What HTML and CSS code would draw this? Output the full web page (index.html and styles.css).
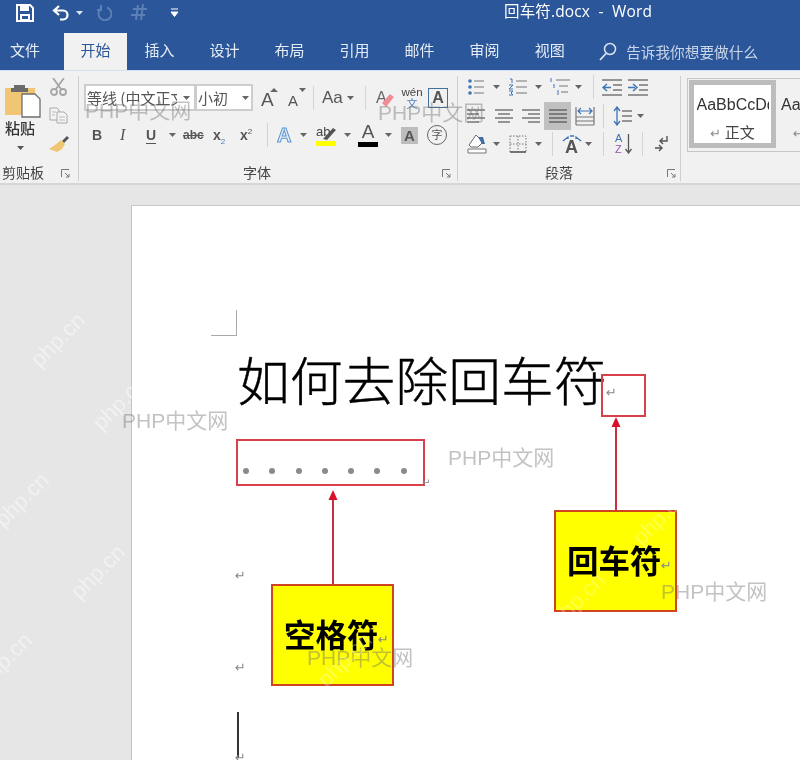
FILE: index.html
```html
<!DOCTYPE html>
<html lang="zh-CN">
<head>
<meta charset="utf-8">
<title>回车符.docx - Word</title>
<link rel="stylesheet" href="styles.css">
</head>
<body>
<div class="app">
  <header class="titlebar">
    <svg class="ml16" width="18" height="18" viewBox="0 0 18 18"><path d="M1 1h13l3 3v13H1z" fill="none" stroke="#fff" stroke-width="2"/><rect x="4" y="2" width="9" height="5" fill="#fff"/><rect x="4" y="10" width="10" height="7" fill="#fff"/><rect x="6" y="12" width="6" height="3" fill="#2b579a"/></svg>
    <svg class="ml18" width="18" height="17" viewBox="0 0 18 17"><path d="M7 2L2 6.500 7 11M2 6.500h9c6 0 6 9 0 9H8" fill="none" stroke="#fff" stroke-width="2.200"/></svg>
    <svg class="ml6" width="7" height="4" viewBox="0 0 7 4"><path d="M0 0h7L3.500 4z" fill="#dbe5f1"/></svg>
    <svg class="ml13" width="16" height="17" viewBox="0 0 16 17"><path d="M5 1v5h-4M5 4.500A6.500 6.500 0 1 0 11 3.500" fill="none" stroke="#5d7fb5" stroke-width="2"/></svg>
    <svg class="ml18" width="18" height="17" viewBox="0 0 18 17"><path d="M6 16L8 1M11 16L13 0M1 11h14M3 5h14" fill="none" stroke="#5d7fb5" stroke-width="2"/></svg>
    <svg class="ml22" width="9" height="9" viewBox="0 0 9 9"><path d="M1 1h7M1 4h7L4.500 8.500 1 4z" fill="#fff" stroke="#fff"/></svg>
    <div class="doc-title">回车符.docx&nbsp; -&nbsp; Word</div>
  </header>

  <nav class="tabs">
    <span class="tab tab-file">文件</span>
    <span class="tab tab-active">开始</span>
    <span class="tab">插入</span>
    <span class="tab">设计</span>
    <span class="tab">布局</span>
    <span class="tab">引用</span>
    <span class="tab">邮件</span>
    <span class="tab">审阅</span>
    <span class="tab">视图</span>
    <svg class="ml17" width="18" height="19" viewBox="0 0 18 19"><circle cx="11" cy="7" r="5.500" fill="none" stroke="#dbe5f1" stroke-width="1.500"/><path d="M7 11.500L1 18" stroke="#dbe5f1" stroke-width="1.800"/></svg>
    <span class="tell">告诉我你想要做什么</span>
  </nav>

  <section class="ribbon">
    <div class="group g-clip">
      <div class="clip-body">
        <div class="paste">
          <svg width="37" height="34" viewBox="0 0 37 34"><rect x="1" y="4" width="30" height="27" fill="#f0c674"/><path d="M10 4V1h11v3h3v4H7V4z" fill="#6b6b6b"/><path d="M18 10h13l5 5v18H18z" fill="#fff" stroke="#6e6e6e" stroke-width="1.300"/></svg>
          <span class="paste-label">粘贴</span>
          <svg class="paste-caret" width="7" height="4" viewBox="0 0 7 4"><path d="M0 0h7L3.500 4z" fill="#555"/></svg>
        </div>
        <div class="tools">
          <svg width="19" height="18" viewBox="0 0 19 18"><path d="M4 0l8 11M15 0L7 11" stroke="#a5a5a5" stroke-width="1.800" fill="none"/><circle cx="5" cy="14" r="3" fill="none" stroke="#a5a5a5" stroke-width="1.800"/><circle cx="14" cy="14" r="3" fill="none" stroke="#a5a5a5" stroke-width="1.800"/></svg>
          <svg width="19" height="17" viewBox="0 0 19 17"><path d="M1 1h7l2 2v10H1z" fill="#f4f4f4" stroke="#a8a8a8"/><path d="M8 5h7l3 3v8H8z" fill="#f4f4f4" stroke="#a8a8a8"/><path d="M10 10h6M10 13h6M3 5h4M3 8h3" stroke="#bbb"/></svg>
          <svg width="20" height="17" viewBox="0 0 20 17"><path d="M13 6l5-5 2 2-5 5z" fill="#555"/><path d="M12 5l4 4-3 5-5 3-8-3 6-4z" fill="#f0c674"/></svg>
        </div>
      </div>
      <footer class="g-foot foot-clip">
        <span class="g-label">剪贴板</span>
        <svg class="launcher" width="9" height="9" viewBox="0 0 9 9"><path d="M.5 8V.5H8M4 4l4 4M8 5v3H5" fill="none" stroke="#777"/></svg>
      </footer>
    </div>

    <div class="group g-font">
      <div class="row row-combo">
        <div class="combo combo-font ml5"><span class="combo-text">等线 (中文正文)</span><svg width="7" height="4" viewBox="0 0 7 4"><path d="M0 0h7L3.500 4z" fill="#666"/></svg></div>
        <div class="combo combo-size"><span class="combo-text">小初</span><svg width="7" height="4" viewBox="0 0 7 4"><path d="M0 0h7L3.500 4z" fill="#666"/></svg></div>
        <svg class="ml7" width="20" height="24" viewBox="0 0 20 24"><text x="1" y="20" class="svg-a grow">A</text><path d="M10 6l4-4 4 4z" fill="#666"/></svg>
        <svg class="ml6" width="20" height="24" viewBox="0 0 20 24"><text x="2" y="20" class="svg-a shrink">A</text><path d="M13 2h7l-3.500 4z" fill="#666"/></svg>
        <i class="sep ml7"></i>
        <span class="aa ml8">Aa</span>
        <svg class="ml5" width="7" height="4" viewBox="0 0 7 4"><path d="M0 0h7L3.500 4z" fill="#666"/></svg>
        <i class="sep ml11"></i>
        <svg class="ml10" width="18" height="22" viewBox="0 0 18 22"><text x="0" y="16" class="svg-a clear">A</text><path d="M6 16l8-9 4 3-8 10z" fill="#ef8d96"/></svg>
        <span class="wen ml7"><span class="wen-t">wén</span><span class="wen-b">文</span></span>
        <span class="boxed ml5">A</span>
      </div>
      <div class="row row-fmt">
        <b class="f b ml13">B</b>
        <i class="f it ml18">I</i>
        <span class="f u ml18">U</span>
        <svg class="ml13" width="7" height="4" viewBox="0 0 7 4"><path d="M0 0h7L3.500 4z" fill="#666"/></svg>
        <span class="f abc ml7">abc</span>
        <span class="f xs ml10">x<sub>2</sub></span>
        <span class="f xs ml12">x<sup>2</sup></span>
        <i class="sep ml12"></i>
        <span class="fx ml9">A</span>
        <svg class="ml6" width="7" height="4" viewBox="0 0 7 4"><path d="M0 0h7L3.500 4z" fill="#666"/></svg>
        <span class="hl ml9"><svg width="20" height="24" viewBox="0 0 20 24"><text x="0" y="13" class="svg-ab">ab</text><path d="M7 16L17 5l3 2-9 10z" fill="#555"/><rect y="18" width="20" height="5" fill="#ff0"/></svg></span>
        <svg class="ml8" width="7" height="4" viewBox="0 0 7 4"><path d="M0 0h7L3.500 4z" fill="#666"/></svg>
        <span class="fc ml7">A</span>
        <svg class="ml7" width="7" height="4" viewBox="0 0 7 4"><path d="M0 0h7L3.500 4z" fill="#666"/></svg>
        <span class="shaded ml9">A</span>
        <span class="zi ml9">字</span>
      </div>
      <footer class="g-foot foot-font">
        <span class="g-label g-label-fill">字体</span>
        <svg class="launcher" width="9" height="9" viewBox="0 0 9 9"><path d="M.5 8V.5H8M4 4l4 4M8 5v3H5" fill="none" stroke="#777"/></svg>
      </footer>
    </div>

    <div class="group g-para">
      <div class="row row-p1">
        <svg class="ml10" width="16" height="18" viewBox="0 0 16 18"><path d="M6 3h10M6 9h10M6 15h10" stroke="#777" stroke-width="1.200"/><circle cx="2" cy="3" r="1.800" fill="#3f74b5"/><circle cx="2" cy="9" r="1.800" fill="#3f74b5"/><circle cx="2" cy="15" r="1.800" fill="#3f74b5"/></svg>
        <svg class="ml9" width="7" height="4" viewBox="0 0 7 4"><path d="M0 0h7L3.500 4z" fill="#666"/></svg>
        <svg class="ml8" width="19" height="18" viewBox="0 0 19 18"><path d="M8 3h11M8 9h11M8 15h11" stroke="#777" stroke-width="1.200"/><path d="M2 1h2v4M1 7h4L1 11h4M1 13h4L3 15l2 2H1" stroke="#3f74b5" fill="none"/></svg>
        <svg class="ml8" width="7" height="4" viewBox="0 0 7 4"><path d="M0 0h7L3.500 4z" fill="#666"/></svg>
        <svg class="ml8" width="20" height="18" viewBox="0 0 20 18"><path d="M6 2h14M9 8h9M11 14h7" stroke="#777" stroke-width="1.200"/><path d="M1 0v4M4 6v4M8 12v5" stroke="#3f74b5"/></svg>
        <svg class="ml5" width="7" height="4" viewBox="0 0 7 4"><path d="M0 0h7L3.500 4z" fill="#666"/></svg>
        <i class="sep ml11"></i>
        <svg class="ml8" width="20" height="17" viewBox="0 0 20 17"><path d="M0 1h20M0 16h20M11 6h9M11 11h9" stroke="#777" stroke-width="1.300"/><path d="M9 8.500H2M5 5L1 8.500 5 12" stroke="#3f74b5" stroke-width="1.500" fill="none"/></svg>
        <svg class="ml6" width="20" height="17" viewBox="0 0 20 17"><path d="M0 1h20M0 16h20M11 6h9M11 11h9" stroke="#777" stroke-width="1.300"/><path d="M0 8.500h7M5 5l4 3.500L5 12" stroke="#3f74b5" stroke-width="1.500" fill="none"/></svg>
      </div>
      <div class="row row-p2">
        <svg class="ml9" width="18" height="15" viewBox="0 0 18 15"><path d="M0 1h18M0 5h12M0 9h18M0 13h12" stroke="#777" stroke-width="1.300"/></svg>
        <svg class="ml10" width="18" height="15" viewBox="0 0 18 15"><path d="M0 1h18M3 5h12M0 9h18M3 13h12" stroke="#777" stroke-width="1.300"/></svg>
        <svg class="ml9" width="18" height="15" viewBox="0 0 18 15"><path d="M0 1h18M6 5h12M0 9h18M6 13h12" stroke="#777" stroke-width="1.300"/></svg>
        <span class="justify ml4"><svg width="18" height="15" viewBox="0 0 18 15"><path d="M0 1h18M0 5h18M0 9h18M0 13h18" stroke="#666" stroke-width="1.400"/></svg></span>
        <svg class="ml4" width="20" height="20" viewBox="0 0 20 20"><path d="M1 1v18M19 1v18M1 19h18M1 15h18M1 11h18" stroke="#777" stroke-width="1.200"/><path d="M3 5h14M6 2L3 5l3 3M14 2l3 3-3 3" stroke="#3f74b5" stroke-width="1.200" fill="none"/></svg>
        <i class="sep ml8"></i>
        <svg class="ml9" width="19" height="20" viewBox="0 0 19 20"><path d="M9 5h10M9 10h10M9 15h10" stroke="#777" stroke-width="1.300"/><path d="M4 1v18M1 5l3-4 3 4M1 15l3 4 3-4" stroke="#3f74b5" stroke-width="1.300" fill="none"/></svg>
        <svg class="ml5" width="7" height="4" viewBox="0 0 7 4"><path d="M0 0h7L3.500 4z" fill="#666"/></svg>
      </div>
      <div class="row row-p3">
        <svg class="ml9" width="20" height="20" viewBox="0 0 20 20"><path d="M9 1l7 7-5 5H4L2 11z" fill="#fff" stroke="#666"/><path d="M11 3h5l2 7h-3z" fill="#3f6ea5"/><path d="M1 15h18v4H1z" fill="#fff" stroke="#777"/></svg>
        <svg class="ml6" width="7" height="4" viewBox="0 0 7 4"><path d="M0 0h7L3.500 4z" fill="#666"/></svg>
        <svg class="ml9" width="18" height="18" viewBox="0 0 18 18"><path d="M1 1h16v16H1zM9 1v16M1 9h16" fill="none" stroke="#777" stroke-dasharray="1.500 1.500"/><path d="M1 17h16" stroke="#555" stroke-width="1.500"/></svg>
        <svg class="ml8" width="7" height="4" viewBox="0 0 7 4"><path d="M0 0h7L3.500 4z" fill="#666"/></svg>
        <i class="sep ml10"></i>
        <svg class="ml9" width="20" height="20" viewBox="0 0 20 20"><text x="3" y="19" class="svg-a dir">A</text><path d="M1 7l5-4v2M19 7l-5-4v2M8 2h4" stroke="#3f74b5" stroke-width="1.300" fill="none"/></svg>
        <svg class="ml3" width="7" height="4" viewBox="0 0 7 4"><path d="M0 0h7L3.500 4z" fill="#666"/></svg>
        <i class="sep ml11"></i>
        <span class="sort ml11"><span class="sort-a"><b>A</b><b class="sort-z">Z</b></span><svg width="7" height="22" viewBox="0 0 7 22"><path d="M3.500 1v19M.5 16l3 4 3-4" stroke="#555" stroke-width="1.300" fill="none"/></svg></span>
        <i class="sep ml10"></i>
        <svg class="ml12" width="13" height="18" viewBox="0 0 13 18"><path d="M12 1v5H6M8 3L5 6l3 3" fill="none" stroke="#555" stroke-width="1.400"/><path d="M0 13h6M4 10l3 3-3 3" fill="none" stroke="#555" stroke-width="1.400"/></svg>
      </div>
      <footer class="g-foot foot-para">
        <span class="g-label g-label-fill">段落</span>
        <svg class="launcher" width="9" height="9" viewBox="0 0 9 9"><path d="M.5 8V.5H8M4 4l4 4M8 5v3H5" fill="none" stroke="#777"/></svg>
      </footer>
    </div>

    <div class="group g-styles">
      <div class="gallery">
        <div class="style-card selected"><span class="style-sample">AaBbCcDd</span><span class="style-name"><small class="ret">↵</small> 正文</span></div>
        <div class="style-card"><span class="style-sample">Aa</span><span class="style-name"><small class="ret">↵</small></span></div>
      </div>
    </div>
  </section>

  <main class="canvas">
    <article class="page">
      <div class="corner"></div>
      <h1 class="doc-h">如何去除回车符<span class="ret ret-title">↵</span></h1>
      <div class="mark-box mark-space"><i></i><i></i><i></i><i></i><i></i><i></i><i></i></div>
      <span class="ret ret-space">↵</span>
      <div class="mark-box mark-return"></div>
      <svg class="arrow arrow-a" width="10" height="96" viewBox="0 0 10 96"><path d="M5 8v88" stroke="#c9303f" stroke-width="2"/><path d="M5 0l4.500 10H.5z" fill="#d9102a"/></svg>
      <svg class="arrow arrow-b" width="10" height="95" viewBox="0 0 10 95"><path d="M5 8v87" stroke="#c9303f" stroke-width="2"/><path d="M5 0l4.500 10H.5z" fill="#d9102a"/></svg>
      <div class="callout callout-a">空格符<span class="ret">↵</span></div>
      <div class="callout callout-b">回车符<span class="ret">↵</span></div>
      <span class="ret ret-l1">↵</span>
      <span class="ret ret-l2">↵</span>
      <span class="cursor"></span>
      <span class="ret ret-l3">↵</span>
    </article>
  </main>

  <div class="overlay">
    <span class="wm wm1">PHP中文网</span>
    <span class="wm wm2">PHP中文网</span>
    <span class="wm wm3">PHP中文网</span>
    <span class="wm wm4">PHP中文网</span>
    <span class="wm wm5">PHP中文网</span>
    <span class="wm wm6">PHP中文网</span>
    <span class="pc pc1">php.cn</span>
    <span class="pc pc2">php.cn</span>
    <span class="pc pc3">php.cn</span>
    <span class="pc pc4">php.cn</span>
    <span class="pc pc5">php.cn</span>
    <span class="pc pc6 pc-faint">php.cn</span>
    <span class="pc pc7 pc-faint">php.cn</span>
    <span class="pc pc8 pc-faint">php.cn</span>
  </div>
</div>
</body>
</html>
```
FILE: styles.css
```css
* { box-sizing: border-box; }
html, body { margin: 0; padding: 0; }
body { width: 800px; height: 760px; overflow: hidden; font-family: "Liberation Sans", "Noto Sans CJK SC", sans-serif; color: #333; }
svg { display: block; flex: none; }
.app { position: relative; width: 800px; height: 760px; display: flex; flex-direction: column; overflow: hidden; filter: blur(0.35px); }

.ml3 { margin-left: 3px; } .ml4 { margin-left: 4px; } .ml5 { margin-left: 5px; } .ml6 { margin-left: 6px; }
.ml7 { margin-left: 7px; } .ml8 { margin-left: 8px; } .ml9 { margin-left: 9px; } .ml10 { margin-left: 10px; }
.ml11 { margin-left: 11px; } .ml12 { margin-left: 12px; } .ml13 { margin-left: 13px; } .ml16 { margin-left: 16px; }
.ml17 { margin-left: 17px; } .ml18 { margin-left: 18px; } .ml22 { margin-left: 22px; }

/* title bar */
.titlebar { height: 33px; background: #2b579a; display: flex; align-items: center; padding-bottom: 8px; flex: none; }
.doc-title { margin: 0 0 4px 325px; font: 15.500px/20px "Open Sans", "Noto Sans CJK SC", sans-serif; letter-spacing: 0.15px; color: #fff; white-space: nowrap; }

/* tabs */
.tabs { height: 37px; background: #2b579a; display: flex; align-items: center; flex: none; color: #e6ecf5; font: 15px/20px "Noto Sans CJK SC", sans-serif; }
.tab { height: 37px; line-height: 33px; padding: 0 17.5px; white-space: nowrap; }
.tab-file { padding: 0 24px 0 10px; }
.tab-active { padding: 0 16.5px; background: #f1f1f1; color: #2b579a; }
.tell { margin-left: 9px; font-size: 14.67px; color: #c9d5e8; white-space: nowrap; }

/* ribbon */
.ribbon { height: 115px; background: #f1f1f1; border-top: 1px solid #cfe0f3; border-bottom: 2px solid #d6d6d6; display: flex; flex: none; }
.group { position: relative; display: flex; flex-direction: column; flex: none; height: 105px; margin-top: 5px; border-right: 1px solid #cfcfcf; }
.g-clip { width: 79px; }
.g-font { width: 379px; }
.g-para { width: 223px; }
.g-styles { flex: 1; border-right: 0; }
.row { display: flex; align-items: center; }
.sep { display: block; width: 1px; height: 24px; background: #d4d4d4; flex: none; }
.g-foot { margin-top: auto; display: flex; align-items: center; height: 16px; font-size: 14px; color: #444; }
.g-label { white-space: nowrap; line-height: 16px; }
.g-label-fill { flex: 1; text-align: center; }
.launcher { margin-left: 7px; }
.foot-clip { padding-left: 2px; }
.foot-clip .launcher { margin-left: 17px; }
.foot-font { padding-right: 6px; }
.foot-para { padding-right: 4px; }

.clip-body { display: flex; }
.paste { width: 45px; padding: 8px 0 0 4px; display: flex; flex-direction: column; }
.paste-label { font-size: 15px; line-height: 20px; color: #333; margin: 1px 0 0 1px; font-weight: 500; white-space: nowrap; }
.paste-caret { margin: 7px 0 0 13px; }
.tools { margin-left: 4px; padding-top: 2px; display: flex; flex-direction: column; gap: 11px; }

.row-combo { height: 27px; margin-top: 8px; }
.row-fmt { height: 26px; margin-top: 11px; }
.combo { height: 27px; background: #fff; border: 2px solid #cdcdcd; display: flex; align-items: center; font: 15px/20px "Noto Sans CJK SC", sans-serif; color: #555; overflow: hidden; flex: none; }
.combo-font { width: 112px; padding-left: 1px; }
.combo-size { width: 57px; padding-left: 1px; border-left-width: 1px; }
.combo-font .combo-text { width: 90px; margin-right: 6px; overflow: hidden; white-space: nowrap; }
.combo-size .combo-text { width: 44px; }
.svg-a { font-family: "Liberation Sans", sans-serif; fill: #555; }
.grow { font-size: 19px; }
.shrink { font-size: 15px; }
.clear { font-size: 16px; fill: #666; }
.dir { font-size: 18px; font-weight: bold; }
.svg-ab { font: 13px "Liberation Sans", sans-serif; fill: #444; }
.aa { font-size: 17px; line-height: 24px; color: #555; width: 20px; white-space: nowrap; }
.wen { width: 22px; display: flex; flex-direction: column; align-items: center; color: #444; }
.wen-t { font-size: 11.500px; line-height: 12px; }
.wen-b { font-size: 11px; line-height: 12px; color: #4a7ebb; }
.boxed { width: 20px; height: 20px; border: 1.500px solid #41719c; font-size: 16px; line-height: 18px; text-align: center; color: #555; font-weight: bold; }

.f { display: block; font-family: "Liberation Sans", sans-serif; font-size: 14px; line-height: 20px; color: #555; white-space: nowrap; }
.b { width: 10px; font-weight: bold; font-style: normal; }
.it { width: 8px; font-family: "Liberation Serif", serif; font-size: 16px; font-style: italic; }
.u { width: 10px; font-weight: bold; border-bottom: 1.500px solid #555; line-height: 16px; }
.abc { width: 20px; font-size: 12px; text-decoration: line-through; font-weight: bold; }
.xs { width: 15px; font-size: 14px; font-weight: bold; }
.xs sub, .xs sup { font-size: 8px; line-height: 0; font-weight: normal; color: #4a7ebb; }
.xs sup { color: #555; }
.fx { width: 17px; font-size: 20px; line-height: 24px; font-weight: bold; color: #e6f0fa; -webkit-text-stroke: 1px #5b94d0; }
.hl { width: 20px; }
.fc { width: 20px; height: 24px; font-size: 19px; line-height: 18px; text-align: center; color: #555; border-bottom: 5px solid #000; }
.shaded { width: 17px; height: 17px; background: #bdbdbd; font-size: 15px; line-height: 17px; text-align: center; font-weight: bold; color: #555; }
.zi { width: 20px; height: 20px; border: 1.500px solid #666; border-radius: 50%; font: 11px/17px "Noto Sans CJK SC", sans-serif; text-align: center; color: #555; }

.row-p1 { height: 20px; margin-top: 1px; }
.row-p2 { height: 28px; margin-top: 5px; }
.row-p3 { height: 24px; margin-top: 2px; }
.justify { width: 27px; height: 28px; background: #c0c0c0; display: flex; align-items: center; justify-content: center; }
.sort { width: 17px; display: flex; gap: 1px; }
.sort-a { width: 9px; display: flex; flex-direction: column; font: 11px/11px "Liberation Sans", sans-serif; color: #3f74b5; }
.sort-a b { font-weight: normal; }
.sort-z { color: #8f5aa5; }

.gallery { margin: 2px 0 0 6px; width: 130px; height: 74px; border: 1px solid #c6c6c6; border-right: 0; display: flex; padding: 1px; gap: 5px; }
.style-card { width: 87px; height: 68px; flex: none; display: flex; flex-direction: column; align-items: center; overflow: hidden; }
.style-card.selected { background: #fff; border: 5px solid #bcbcbc; }
.style-sample { height: 34px; width: 72px; text-align: left; overflow: hidden; white-space: nowrap; font: 16px/39px "Liberation Sans", sans-serif; color: #333; }
.style-name { font: 15px/20px "Noto Sans CJK SC", sans-serif; color: #444; margin-top: 3px; white-space: nowrap; }
.style-card:not(.selected) { padding: 5px 0 0 0; align-items: flex-start; }
.style-card:not(.selected) .style-name { padding-left: 12px; }

/* document */
.canvas { flex: 1; background: #e6e6e6; padding: 20px 0 0 131px; overflow: hidden; display: flex; min-height: 0; }
.page { position: relative; flex: 1; height: 700px; background: #fff; border-left: 1px solid #c4c4c4; border-top: 1px solid #c8c8c8; padding: 136px 0 0 105px; }
.corner { position: absolute; left: 79px; top: 104px; width: 26px; height: 26px; border-right: 1px solid #aaa; border-bottom: 1px solid #aaa; }
.doc-h { margin: 0; position: relative; font: 300 52.800px/72px "Noto Sans CJK SC", sans-serif; -webkit-text-stroke: 0.4px #000; color: #000; white-space: nowrap; }
.ret { font: 13px/12px "DejaVu Sans", sans-serif; color: #888; font-weight: normal; -webkit-text-stroke: 0; }
.ret-title { position: absolute; left: 369px; top: 45px; }
.mark-box { position: absolute; border: 2px solid #d8404c; }
.mark-space { left: 104px; top: 233px; width: 189px; height: 47px; display: flex; justify-content: space-between; align-items: flex-end; padding: 0 16.500px 10.500px 5px; }
.mark-space i { display: block; width: 6px; height: 6px; border-radius: 50%; background: #8a8a8a; }
.mark-return { left: 469px; top: 168px; width: 45px; height: 43px; }
.ret-space { position: absolute; left: 290px; top: 271px; font-size: 10px; }
.arrow { position: absolute; }
.arrow-a { left: 196px; top: 284px; }
.arrow-b { left: 479px; top: 211px; }
.callout { position: absolute; background: #ff0; border: 2px solid #d0451f; width: 123px; height: 102px; font: bold 31.500px/38px "Noto Sans CJK SC", sans-serif; color: #000; white-space: nowrap; padding: 28px 0 0 11px; }
.callout .ret { position: absolute; right: 3px; top: 48px; }
.callout-a { left: 139px; top: 378px; }
.callout-b { left: 422px; top: 304px; }
.ret-l1, .ret-l2, .ret-l3 { position: absolute; left: 103px; }
.ret-l1 { top: 364px; }
.ret-l2 { top: 456px; }
.ret-l3 { top: 546px; }
.cursor { position: absolute; left: 105px; top: 506px; width: 2px; height: 46px; background: #333; }

/* watermarks */
.overlay { position: absolute; inset: 0; pointer-events: none; }
.wm { position: absolute; font: 21px/24px "Liberation Sans", "Noto Sans CJK SC", sans-serif; color: rgba(110, 110, 110, 0.42); white-space: nowrap; }
.wm1 { left: 85px; top: 99px; }
.wm2 { left: 378px; top: 101px; }
.wm3 { left: 122px; top: 409px; }
.wm4 { left: 448px; top: 446px; }
.wm5 { left: 661px; top: 580px; }
.wm6 { left: 307px; top: 646px; }
.pc { position: absolute; width: 80px; text-align: center; font: 22px/26px "Liberation Sans", sans-serif; color: rgba(255, 255, 255, 0.45); transform: rotate(-45deg); white-space: nowrap; }
.pc-faint { color: rgba(255, 255, 255, 0.28); }
.pc1 { left: 18px; top: 327px; }
.pc2 { left: 80px; top: 390px; }
.pc3 { left: -18px; top: 487px; }
.pc4 { left: 58px; top: 559px; }
.pc5 { left: -35px; top: 647px; }
.pc6 { left: 538px; top: 587px; }
.pc7 { left: 620px; top: 505px; }
.pc8 { left: 305px; top: 647px; }
```
